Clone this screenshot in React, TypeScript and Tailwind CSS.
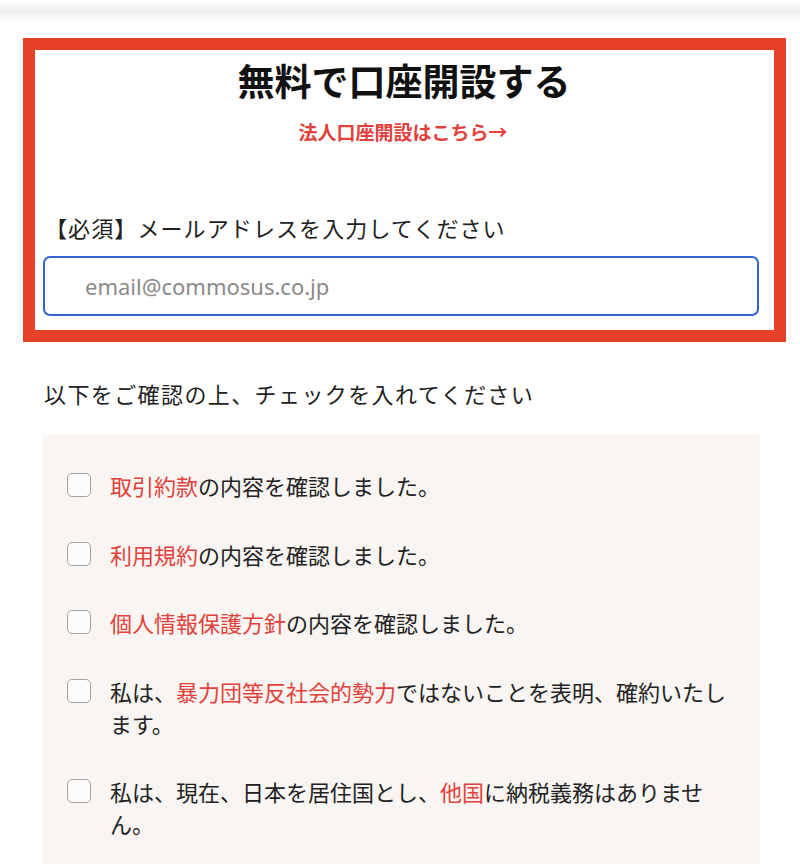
const font = { fontFamily: '"Noto Sans CJK JP", "Noto Sans", sans-serif' };

const rows: { parts: { text: string; link?: boolean }[] }[] = [
  { parts: [{ text: '取引約款', link: true }, { text: 'の内容を確認しました。' }] },
  { parts: [{ text: '利用規約', link: true }, { text: 'の内容を確認しました。' }] },
  { parts: [{ text: '個人情報保護方針', link: true }, { text: 'の内容を確認しました。' }] },
  {
    parts: [
      { text: '私は、' },
      { text: '暴力団等反社会的勢力', link: true },
      { text: 'ではないことを表明、確約いたします。' },
    ],
  },
  {
    parts: [
      { text: '私は、現在、日本を居住国とし、' },
      { text: '他国', link: true },
      { text: 'に納税義務はありません。' },
    ],
  },
];

const CheckRow = ({ parts }: { parts: { text: string; link?: boolean }[] }) => {
  return (
    <label className="flex items-start gap-[19px]">
      <span className="mt-[4px] w-[24px] h-[24px] shrink-0 rounded-[5px] border-[1.5px] border-[#a3a3a3] bg-[#fdfcfb]"></span>
      <span className="text-[22px] leading-[32px] text-[#222]">
        {parts.map((p, i) =>
          p.link ? (
            <span key={i} className="text-[#e2403a]">
              {p.text}
            </span>
          ) : (
            <span key={i}>{p.text}</span>
          )
        )}
      </span>
    </label>
  );
};

const App = () => {
  return (
    <div className="min-h-[864px] bg-white" style={font}>
      {/* header shadow */}
      <div className="h-[22px] bg-gradient-to-b from-white via-[#efefef] to-white"></div>

      {/* highlighted form section */}
      <div className="mt-[16px] ml-[23px] w-[763px] border-[12px] border-[#e8412a] pl-[8px] pr-[15px] pt-[8px] pb-[14px]">
        <h1 className="pl-[6px] text-center text-[37px] leading-[44px] font-bold text-[#111]">無料で口座開設する</h1>
        <p className="mt-[17px] pl-[4px] text-center text-[19px] leading-[26px] font-bold text-[#e2403a]">
          法人口座開設はこちら→
        </p>
        <p className="mt-[66px] ml-[2px] text-[22px] leading-[32px] tracking-[1.1px] text-[#222]">
          【必須】メールアドレスを入力してください
        </p>
        <div className="mt-[13px] h-[60px] rounded-[7px] border-[2.5px] border-[#3164d1] flex items-center pl-[40px]">
          <span
            className="text-[22px] text-[#8a8a8a]"
            style={{ fontFamily: '"Noto Sans", "Liberation Sans", sans-serif' }}
          >
            email@commosus.co.jp
          </span>
        </div>
      </div>

      {/* agreement */}
      <div className="ml-[43px] w-[717px]">
        <p className="mt-[35px] ml-[1px] text-[22px] leading-[32px] tracking-[1.4px] text-[#222]">
          以下をご確認の上、チェックを入れてください
        </p>
        <div className="mt-[26px] bg-[#f8f5f2] pl-[24px] pr-[20px] pt-[34px] pb-[40px] flex flex-col gap-[36.5px]">
          {rows.map((r, i) => (
            <CheckRow key={i} parts={r.parts} />
          ))}
        </div>
      </div>
    </div>
  );
};

export default App;
